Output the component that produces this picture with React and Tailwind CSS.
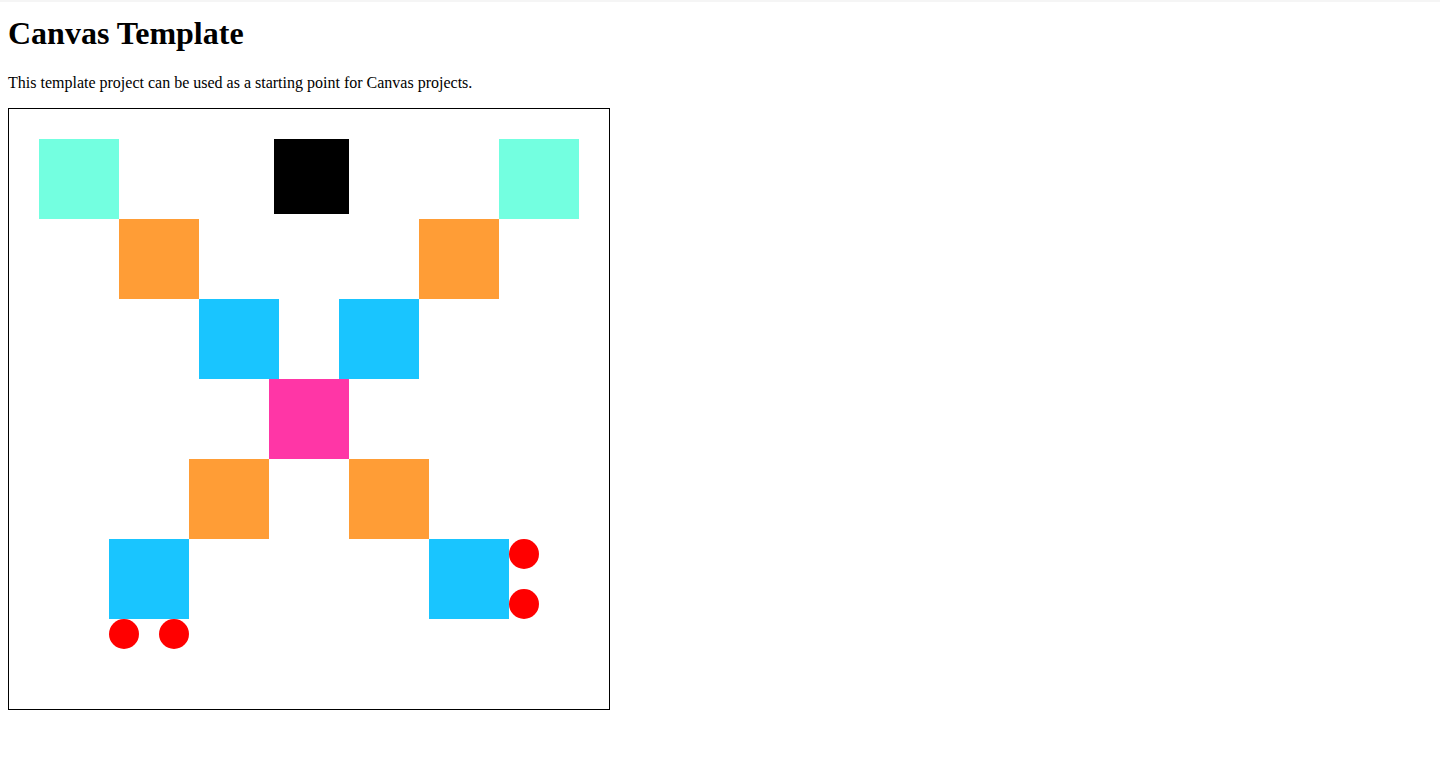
import React from 'react';

const squares = [
  { x: 30, y: 30, s: 80, c: '#73ffe0' },
  { x: 490, y: 30, s: 80, c: '#73ffe0' },
  { x: 265, y: 30, s: 75, c: '#000000' },
  { x: 110, y: 110, s: 80, c: '#ff9d36' },
  { x: 410, y: 110, s: 80, c: '#ff9d36' },
  { x: 190, y: 190, s: 80, c: '#19c5ff' },
  { x: 330, y: 190, s: 80, c: '#19c5ff' },
  { x: 260, y: 270, s: 80, c: '#ff36a6' },
  { x: 180, y: 350, s: 80, c: '#ff9d36' },
  { x: 340, y: 350, s: 80, c: '#ff9d36' },
  { x: 100, y: 430, s: 80, c: '#19c5ff' },
  { x: 420, y: 430, s: 80, c: '#19c5ff' },
];

const dots = [
  { x: 115, y: 525 },
  { x: 165, y: 525 },
  { x: 515, y: 445 },
  { x: 515, y: 495 },
];

export default function App() {
  return (
    <div className="min-h-screen bg-white border-t-2 border-[#f5f5f5] px-2 font-['Liberation_Serif','Times_New_Roman',serif] text-black">
      <h1 className="mt-[13px] text-[32px] leading-[37px] font-bold">Canvas Template</h1>
      <p className="mt-[22px] text-[16px] leading-[18px]">
        This template project can be used as a starting point for Canvas projects.
      </p>
      <div className="mt-4 w-[602px] h-[602px] border border-black">
        <svg width="600" height="600" viewBox="0 0 600 600" className="block">
          {squares.map((q, i) => (
            <rect key={i} x={q.x} y={q.y} width={q.s} height={q.s} fill={q.c} />
          ))}
          {dots.map((d, i) => (
            <circle key={i} cx={d.x} cy={d.y} r="15" fill="#ff0000" />
          ))}
        </svg>
      </div>
    </div>
  );
}
